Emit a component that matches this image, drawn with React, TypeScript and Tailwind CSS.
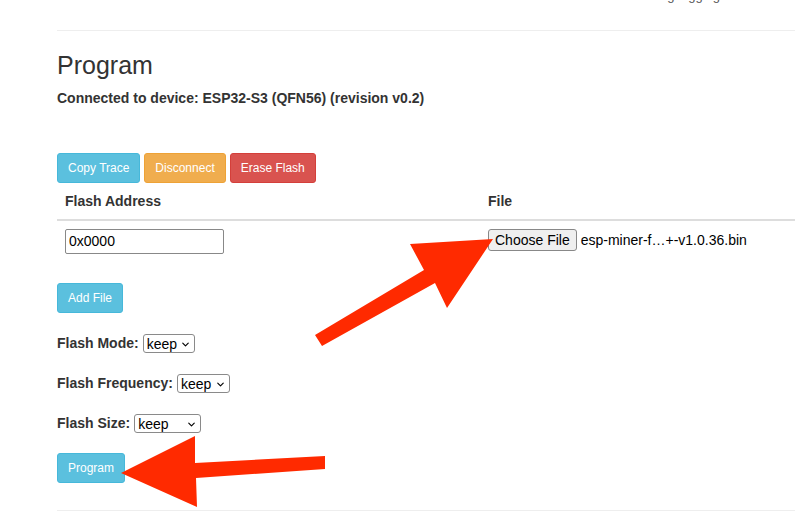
import { ChevronDown } from 'lucide-react';

const btn = 'h-[30px] rounded-[3px] border px-[10px] text-[12px] leading-none text-white';

function Select({ width }: { width: string }) {
  return (
    <span className={`relative inline-flex h-[19px] items-center rounded-[3px] border border-[#8a8a8a] bg-white pl-[3px] ${width}`}>
      <span className="text-[14px] leading-none text-black">keep</span>
      <ChevronDown className="absolute right-[3px] top-[4px] size-[11px] text-black" strokeWidth={2.5} />
    </span>
  );
}

function Field({ label, width }: { label: string; width: string }) {
  return (
    <div className="flex items-center gap-[4px]">
      <span className="text-[14px] font-bold leading-[19px]">{label}</span>
      <Select width={width} />
    </div>
  );
}

export default function App() {
  return (
    <div className="relative h-[523px] w-[795px] overflow-hidden bg-white text-[#333]" style={{ fontFamily: '"Liberation Sans", Arial, sans-serif' }}>
      {/* cut-off line from the panel above */}
      <div className="flex h-[30px] justify-end pr-[75px]">
        <div className="-mt-[11px] h-[13px] text-[13px] leading-[13px] text-[#555]">Baud rate · Debug logging</div>
      </div>

      <div className="ml-[57px] border-t border-[#eee] pt-[20px]">
        <h2 className="text-[25px] leading-[28px]">Program</h2>
        <p className="mt-[11px] text-[14px] font-bold leading-[16px]">Connected to device: ESP32-S3 (QFN56) (revision v0.2)</p>

        <div className="mt-[47px] flex gap-[4px]">
          <button className={`${btn} border-[#46b8da] bg-[#5bc0de]`}>Copy Trace</button>
          <button className={`${btn} border-[#eea236] bg-[#f0ad4e]`}>Disconnect</button>
          <button className={`${btn} border-[#d43f3a] bg-[#d9534f]`}>Erase Flash</button>
        </div>

        <div className="grid grid-cols-[423px_1fr] border-b-2 border-[#ddd] text-[14px] font-bold">
          <div className="px-[8px] pb-[10px] pt-[10px] leading-[16px]">Flash Address</div>
          <div className="px-[8px] pb-[10px] pt-[10px] leading-[16px]">File</div>
        </div>
        <div className="grid grid-cols-[423px_1fr] pt-[8px]">
          <div className="px-[8px]">
            <div className="flex h-[25px] w-[159px] items-center rounded-[2px] border border-[#888] px-[3px] text-[14px] text-black">0x0000</div>
          </div>
          <div className="flex items-start gap-[4px] px-[8px]">
            <button className="h-[22px] rounded-[3px] border border-[#888] bg-[#efefef] px-[6px] text-[14px] leading-none text-black">Choose File</button>
            <span className="pt-[4px] text-[14px] leading-none text-black">esp-miner-f…+-v1.0.36.bin</span>
          </div>
        </div>

        <button className={`${btn} mt-[29px] border-[#46b8da] bg-[#5bc0de]`}>Add File</button>

        <div className="mt-[21px] flex flex-col gap-[21px]">
          <Field label="Flash Mode:" width="w-[52px]" />
          <Field label="Flash Frequency:" width="w-[53px]" />
          <Field label="Flash Size:" width="w-[67px]" />
        </div>

        <button className={`${btn} mt-[20px] border-[#46b8da] bg-[#5bc0de]`}>Program</button>

        <div className="mt-[27px] border-t border-[#eee]" />
      </div>

      {/* annotation arrows */}
      <svg className="pointer-events-none absolute left-0 top-0" width="795" height="523">
        <polygon fill="#ff2a00" points="493,239 410,244 424,270 315,335 322,346 435,283 447,308" />
        <polygon fill="#ff2a00" points="121,473 195,436 195,463 325,456 325,469 196,478 197,507" />
      </svg>
    </div>
  );
}
